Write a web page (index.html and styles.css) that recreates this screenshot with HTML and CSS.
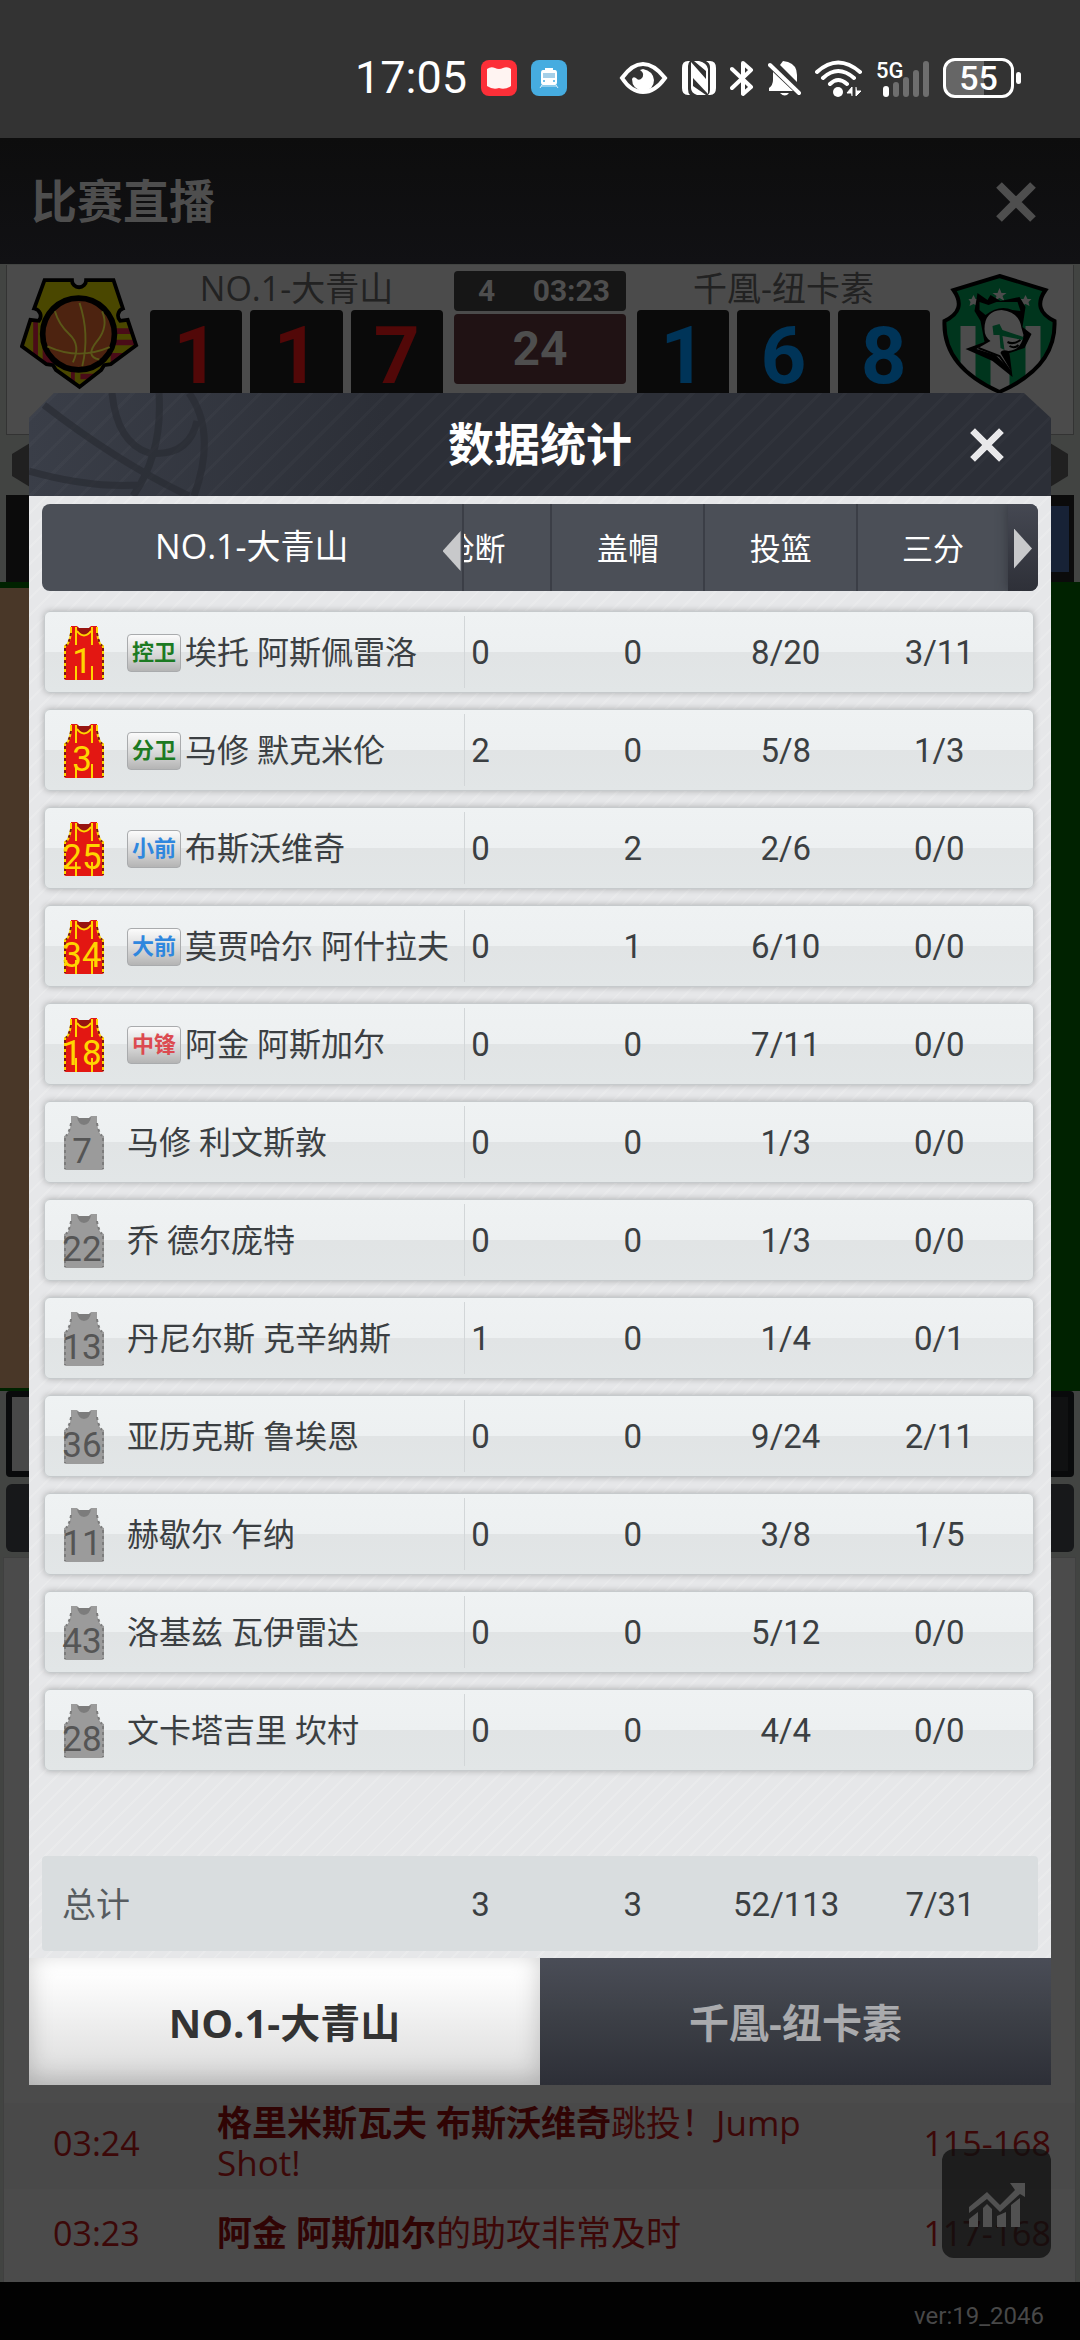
FILE: index.html
```html
<!DOCTYPE html>
<html lang="zh-CN">
<head>
<meta charset="UTF-8">
<meta name="viewport" content="width=device-width, initial-scale=1">
<title>比赛直播</title>
<link rel="stylesheet" href="styles.css">
</head>
<body>

	<!-- shared shapes -->
	<svg class="defs" aria-hidden="true">
		<symbol id="jersey" viewBox="0 0 42 54">
			<path class="j-body" d="M8 0H14L16 2H26L28 0H34V7Q35 15 38 19L41 20V52Q41 54 39 54H3Q1 54 1 52V20L4 19Q7 15 8 7Z"/>
			<path class="j-neck" d="M14 1L16 2H26L28 1Q27 8 21 9Q15 8 14 1Z"/>
			<path class="j-line" d="M13 1V19M29 1V19M14 5Q21 14 28 5M13 40V54M29 40V54M8 1V7Q7 15 4 19L2 20V53M34 1V7Q35 15 38 19L40 20V53"/>
			<path class="j-side" d="M2 22V53M40 22V53M8 7Q7 15 3 20M34 7Q35 15 39 20"/>
		</symbol>
		<symbol id="cross" viewBox="0 0 40 40">
			<path d="M3 3L37 37M37 3L3 37" fill="none" stroke="currentColor" stroke-width="8"/>
		</symbol>
	</svg>

	<div class="statusbar">
		<div class="status-group">
			<span class="clock">17:05</span>
			<svg width="36" height="36" viewBox="0 0 36 36"><rect width="36" height="36" rx="8" fill="#fc2f38"/><path d="M6 9Q10 6 14 8Q18 10 22 8Q26 6 30 9V26Q24 30 18 28Q12 30 6 26Z" fill="#fff4f2"/></svg>
			<svg width="36" height="36" viewBox="0 0 36 36"><rect width="36" height="36" rx="8" fill="#46ace0"/><path d="M14 8H22V10H24Q26 10 26 13V22Q26 25 24 25H12Q10 25 10 22V13Q10 10 12 10H14Z" fill="#fff"/><path d="M12 13H24V18H12Z" fill="#a5cfe8"/><circle cx="13" cy="21" r="1" fill="#46ace0"/><circle cx="23" cy="21" r="1" fill="#46ace0"/><path d="M11 25L9 28M25 25L27 28M10 26H26" stroke="#d6ecf8" stroke-width="1"/></svg>
		</div>
		<div class="status-group">
			<svg width="49" height="34" viewBox="0 0 49 34"><path d="M3 17Q13 3 24 3T46 17Q36 31 24 31T3 17Z" fill="none" stroke="#fff" stroke-width="4"/><path d="M24 8Q34 10 35 19Q35 29 24 30Q13 28 13 18Q14 15 17 17Q19 20 22 18Q27 13 21 9Z" fill="#fff"/></svg>
			<svg width="34" height="34" viewBox="0 0 34 34"><path d="M8 0H6Q0 0 0 7V27Q0 34 6 34H8Q6 32 6 28V5Q6 2 8 0ZM26 34H28Q34 34 34 27V7Q34 0 28 0H24Q28 2 28 6V29Q28 32 26 34Z" fill="#fff"/><path d="M9 1L24 18V10L12 0H17Q25 2 26 8V33L11 17V25L24 34H15Q9 32 9 27Z" fill="#fff"/></svg>
			<svg width="24" height="37" viewBox="0 0 24 37"><path d="M2 9L21 27L13 34V3L21 10L2 28" fill="none" stroke="#fff" stroke-width="4" stroke-linejoin="round" stroke-linecap="round"/></svg>
			<svg width="33" height="37" viewBox="0 0 33 37"><path d="M5 12L25 31H1V28Q5 25 5 20ZM12 5L15 1L20 2Q29 5 29 15V22Z" fill="#fff"/><path d="M2 5L31 33" stroke="#fff" stroke-width="4" stroke-linecap="round"/><path d="M12 33H21Q17 38 12 33Z" fill="#fff"/></svg>
			<svg width="47" height="37" viewBox="0 0 47 37"><path d="M2 12Q23 -7 45 12M8 18Q23 4 39 18M15 24Q23 16 32 24" fill="none" stroke="#fff" stroke-width="4" stroke-linecap="round"/><circle cx="23" cy="32" r="5" fill="#fff"/><path d="M37 36V27L32 33H36M41 27V36L46 31H42" fill="#fff" stroke="#fff"/></svg>
			<svg class="signal" width="53" height="37" viewBox="0 0 53 37"><text x="0" y="18" font-size="22" font-weight="500" fill="#fff">5G</text><g stroke-width="6" stroke-linecap="round"><path d="M10 29V34" stroke="#fff"/><path d="M20 25V34M30 20V34M40 13V34M50 4V34" stroke="#6e6e6e"/></g></svg>
			<div class="battery"><span>55</span></div>
		</div>
	</div>

	<header class="topbar">
		<h1>比赛直播</h1>
		<button type="button" aria-label="关闭直播"><svg width="40" height="40"><use href="#cross"/></svg></button>
	</header>

	<section class="scoreboard">
		<svg class="logo" viewBox="0 0 126 120">
			<clipPath id="cut"><path d="M26 3H55A7 7 0 0 0 70 3H99L109 33A8 8 0 0 0 106 46L114 45L123 72L96 92L89 93L86 98L63 116L38 98L35 93L28 92L2 73L11 45L20 46A8 8 0 0 0 15 33Z"/></clipPath>
			<g clip-path="url(#cut)"><path d="M0 0H126V120H0Z" fill="#4a4700"/><path d="M14 40H19V92H14ZM24 70H36V100H24ZM98 54H126V60H98ZM98 66H126V72H98ZM96 80H126V96H96ZM54 96H58V120H54ZM64 102H90V108H64Z" fill="#4a0c18"/></g>
			<path d="M26 3H55A7 7 0 0 0 70 3H99L109 33A8 8 0 0 0 106 46L114 45L123 72L96 92L89 93L86 98L63 116L38 98L35 93L28 92L2 73L11 45L20 46A8 8 0 0 0 15 33Z" fill="none" stroke="#000" stroke-width="4"/>
			<circle cx="62" cy="60" r="38" fill="#4d2310" stroke="#000" stroke-width="6"/>
			<path d="M37 36Q41 50 52 60Q65 72 56 90M63 27Q74 60 66 94M87 36Q94 52 82 67Q68 84 84 87M29 73Q62 88 95 74" fill="none" stroke="#5a5718" stroke-width="2"/>
		</svg>
		<div class="team home">
			<p>NO.1-大青山</p>
			<div class="digits"><b>1</b><b>1</b><b>7</b></div>
		</div>
		<div class="timer">
			<div class="quarter"><span>4</span><span>03:23</span></div>
			<div class="shot">24</div>
		</div>
		<div class="team away">
			<p>千凰-纽卡素</p>
			<div class="digits"><b>1</b><b>6</b><b>8</b></div>
		</div>
		<svg class="logo" viewBox="0 0 116 122">
			<clipPath id="shield"><path d="M57 3L103 17Q89 37 112 48Q114 94 57 119Q0 94 2 48Q25 37 11 17Z"/></clipPath>
			<g clip-path="url(#shield)"><path d="M0 0H116V122H0Z" fill="#00351d"/><path d="M18 53H33V122H18ZM48 53H67V122H48ZM83 53H98V122H83Z" fill="#4c4c4c"/></g>
			<path d="M57 3L103 17Q89 37 112 48Q114 94 57 119Q0 94 2 48Q25 37 11 17Z" fill="none" stroke="#000" stroke-width="4"/>
			<path d="M57 15L59 20H64L60 23L62 28L57 25L52 28L54 23L50 20H55ZM31 22L33 26H37L34 29L35 33L31 31L27 33L28 29L26 26H29ZM83 22L85 26H89L86 29L87 33L83 31L79 33L80 29L78 26H81Z" fill="#4c4c4c"/>
			<path d="M35 20L45 27L48 22L58 28L77 24L83 34L80 54L89 61L82 75L67 80L70 104L50 88L23 76L42 69L38 48L32 38Z" fill="#000"/>
			<path d="M37 29L46 32L54 29L75 29L78 38L70 37Q57 31 43 42L37 37Z" fill="#00351d"/>
			<path d="M42 56Q42 38 59 37Q77 39 79 55L81 62Q79 77 66 78Q59 76 58 80L68 97L53 82L34 76L48 68Q42 64 42 56Z" fill="#4c4c4c"/>
			<path d="M50 53L57 51L60 57L81 64L80 67L60 63L62 77L58 75L57 62L51 62Z" fill="#00351d"/>
			<path d="M65 69Q71 72 78 67M67 73Q72 76 76 72M36 75L57 83L67 97" fill="none" stroke="#000" stroke-width="2"/>
		</svg>
	</section>
	<div class="ribbon"><i></i><i></i></div>
	<div class="controls"></div>
	<div class="court"></div>
	<div class="panel"></div>
	<div class="panel-bar"></div>

	<section class="feed">
		<div class="play shade">
			<time>03:24</time>
			<p><b>格里米斯瓦夫 布斯沃维奇</b>跳投！Jump Shot!</p>
			<span>115-168</span>
		</div>
		<div class="play">
			<time>03:23</time>
			<p><b>阿金 阿斯加尔</b>的助攻非常及时</p>
			<span>117-168</span>
		</div>
		<button type="button" class="chart" aria-label="数据">
			<svg width="56" height="46" viewBox="0 0 56 46"><path d="M0 26L18 11L31 24L46 9L41 2H56V16L51 13L31 31L18 18L0 32Z"/><path d="M0 38L9 31V46H0ZM14 27L18 23L23 28V46H14ZM28 35L37 31V46H28ZM42 24L51 17V46H42Z"/></svg>
		</button>
	</section>
	<footer>ver:19_2046</footer>

	<!-- stats popup -->
	<div class="dialog" role="dialog" aria-labelledby="stats-title">
		<div class="dialog-head">
			<svg class="ball" viewBox="0 0 190 103"><path d="M15 12Q90 70 160 103M0 78Q60 95 110 92M83 0Q88 50 120 60Q160 64 168 28M130 0Q134 60 104 103M160 0Q188 40 165 103"/></svg>
			<h2 id="stats-title">数据统计</h2>
			<button type="button" aria-label="关闭"><svg width="34" height="34"><use href="#cross"/></svg></button>
		</div>

		<div class="dialog-body">
			<table>
				<thead>
					<tr>
						<th class="team-name">NO.1-大青山<i class="prev"></i></th>
						<th class="cut"><span>抢断</span></th>
						<th>盖帽</th>
						<th>投篮</th>
						<th>三分</th>
						<td class="next"><i></i></td>
					</tr>
				</thead>
				<tbody>
					<tr>
						<td class="name"><svg class="jersey on"><use href="#jersey"/><text x="19" y="47">1</text></svg><em class="guard">控卫</em>埃托 阿斯佩雷洛</td>
						<td class="cut"><span>0</span></td><td>0</td><td>8/20</td><td>3/11</td>
					</tr>
					<tr>
						<td class="name"><svg class="jersey on"><use href="#jersey"/><text x="19" y="47">3</text></svg><em class="guard">分卫</em>马修 默克米伦</td>
						<td class="cut"><span>2</span></td><td>0</td><td>5/8</td><td>1/3</td>
					</tr>
					<tr>
						<td class="name"><svg class="jersey on"><use href="#jersey"/><text x="19" y="47">25</text></svg><em class="forward">小前</em>布斯沃维奇</td>
						<td class="cut"><span>0</span></td><td>2</td><td>2/6</td><td>0/0</td>
					</tr>
					<tr>
						<td class="name"><svg class="jersey on"><use href="#jersey"/><text x="19" y="47">34</text></svg><em class="forward">大前</em>莫贾哈尔 阿什拉夫</td>
						<td class="cut"><span>0</span></td><td>1</td><td>6/10</td><td>0/0</td>
					</tr>
					<tr>
						<td class="name"><svg class="jersey on"><use href="#jersey"/><text x="19" y="47">18</text></svg><em class="center">中锋</em>阿金 阿斯加尔</td>
						<td class="cut"><span>0</span></td><td>0</td><td>7/11</td><td>0/0</td>
					</tr>
					<tr>
						<td class="name"><svg class="jersey"><use href="#jersey"/><text x="19" y="47">7</text></svg>马修 利文斯敦</td>
						<td class="cut"><span>0</span></td><td>0</td><td>1/3</td><td>0/0</td>
					</tr>
					<tr>
						<td class="name"><svg class="jersey"><use href="#jersey"/><text x="19" y="47">22</text></svg>乔 德尔庞特</td>
						<td class="cut"><span>0</span></td><td>0</td><td>1/3</td><td>0/0</td>
					</tr>
					<tr>
						<td class="name"><svg class="jersey"><use href="#jersey"/><text x="19" y="47">13</text></svg>丹尼尔斯 克辛纳斯</td>
						<td class="cut"><span>1</span></td><td>0</td><td>1/4</td><td>0/1</td>
					</tr>
					<tr>
						<td class="name"><svg class="jersey"><use href="#jersey"/><text x="19" y="47">36</text></svg>亚历克斯 鲁埃恩</td>
						<td class="cut"><span>0</span></td><td>0</td><td>9/24</td><td>2/11</td>
					</tr>
					<tr>
						<td class="name"><svg class="jersey"><use href="#jersey"/><text x="19" y="47">11</text></svg>赫歇尔 乍纳</td>
						<td class="cut"><span>0</span></td><td>0</td><td>3/8</td><td>1/5</td>
					</tr>
					<tr>
						<td class="name"><svg class="jersey"><use href="#jersey"/><text x="19" y="47">43</text></svg>洛基兹 瓦伊雷达</td>
						<td class="cut"><span>0</span></td><td>0</td><td>5/12</td><td>0/0</td>
					</tr>
					<tr>
						<td class="name"><svg class="jersey"><use href="#jersey"/><text x="19" y="47">28</text></svg>文卡塔吉里 坎村</td>
						<td class="cut"><span>0</span></td><td>0</td><td>4/4</td><td>0/0</td>
					</tr>
				</tbody>
				<tfoot>
					<tr>
						<th>总计</th>
						<td class="cut"><span>3</span></td><td>3</td><td>52/113</td><td>7/31</td>
					</tr>
				</tfoot>
			</table>
		</div>

		<div class="tabs">
			<button type="button" class="active">NO.1-大青山</button>
			<button type="button">千凰-纽卡素</button>
		</div>
	</div>

</body>
</html>
```
FILE: styles.css
```css
* {
	box-sizing: border-box;
}

body {
	position: relative;
	display: flex;
	flex-direction: column;
	min-height: 100vh;
	margin: 0;
	background: #424442;
	font-family: Roboto, "Noto Sans CJK SC", sans-serif;
	font-size: 34px;
	line-height: 40px;
}

h1, h2, p {
	margin: 0;
}

button {
	padding: 0;
	border: 0;
	background: none;
	font-family: inherit;
	line-height: inherit;
	cursor: pointer;
}

svg {
	display: block;
	flex-shrink: 0;
}

.defs {
	position: absolute;
	width: 0;
	height: 0;
}

/* 状态栏 */
.statusbar {
	display: flex;
	justify-content: flex-end;
	gap: 52px;
	padding: 58px 60px 40px;
	background: #333333;
	color: #ffffff;
}

.status-group {
	display: flex;
	align-items: center;
	gap: 14px;
	height: 40px;
}

.clock {
	font-size: 45px;
}

.signal {
	overflow: visible;
}

.battery {
	position: relative;
	width: 71px;
	height: 40px;
	margin-right: 6px;
	border: 3px solid #ffffff;
	border-radius: 12px;
	background: linear-gradient(90deg, #666666 58%, #333333 58%);
	text-align: center;
	font-size: 34px;
	font-weight: 500;
	line-height: 34px;
}

.battery::after {
	content: "";
	position: absolute;
	top: 11px;
	right: -10px;
	width: 5px;
	height: 12px;
	border-radius: 3px;
	background: #ffffff;
}

/* 标题栏 */
.topbar {
	display: flex;
	align-items: center;
	justify-content: space-between;
	height: 126px;
	padding: 2px 44px 0 31px;
	background: linear-gradient(#0d0d0d, #111114);
	color: #4e4e4e;
}

.topbar h1 {
	font-size: 46px;
	line-height: 60px;
}

.topbar button {
	color: #4e4e4e;
}

/* 比分牌 */
.scoreboard {
	display: flex;
	gap: 11px;
	height: 170px;
	margin: 1px 6px 0;
	padding: 6px 13px 0;
	border: solid #333333;
	border-width: 0 1px 1px;
	background: #4b4b4b;
	overflow: hidden;
}

.logo {
	width: 119px;
	height: 122px;
	margin-top: 2px;
}

.team {
	flex: 1;
	color: #222222;
	text-align: center;
}

.team p {
	margin-bottom: 5px;
	font-family: "Open Sans", "Noto Sans CJK SC", sans-serif;
	line-height: 34px;
}

.digits {
	display: flex;
	gap: 8px;
}

.digits b {
	flex: 1;
	height: 110px;
	border-radius: 4px;
	background: #0a0a0a;
	font-size: 80px;
	line-height: 92px;
}

.home b {
	color: #520808;
}

.away b {
	color: #003458;
}

.timer {
	width: 172px;
	color: #4e4e4e;
	font-weight: bold;
}

.quarter {
	display: flex;
	justify-content: space-between;
	margin-bottom: 3px;
	padding: 0 16px 0 24px;
	border-radius: 4px;
	background: #161616;
	font-size: 30px;
}

.shot {
	border-radius: 4px;
	background: #201214;
	font-size: 48px;
	line-height: 70px;
	text-align: center;
}

.ribbon {
	display: flex;
	align-items: center;
	justify-content: space-between;
	height: 60px;
	padding: 0 12px;
}

.ribbon i {
	width: 36px;
	height: 44px;
	background: #202020;
	clip-path: polygon(0 25%, 50% 0, 100% 25%, 100% 75%, 50% 100%, 0 75%);
}

.controls {
	height: 87px;
	margin: 0 6px;
	border: solid #0b0b0b;
	border-width: 11px 5px 10px;
	background: linear-gradient(90deg, #0b0b0b 50%, #172236 50%);
}

.court {
	height: 809px;
	border-top: 6px solid #002200;
	border-bottom: 3px solid #002200;
	background: linear-gradient(90deg, #493728 50%, #002200 50%);
}

.panel {
	height: 86px;
	margin: 0 6px;
	border: 6px solid #090a0b;
	border-radius: 4px;
	background: linear-gradient(90deg, #484848 50%, #101112 50%);
}

.panel-bar {
	height: 68px;
	margin: 7px 6px 5px;
	border-radius: 6px;
	background: #17181a;
}

/* 文字直播 */
.feed {
	position: relative;
	display: flex;
	flex: 1;
	flex-direction: column;
	justify-content: flex-end;
	margin: 0 4px 0 3px;
	border: solid #404040;
	border-width: 1px 1px 0;
	background: #4b4b4b;
	color: #3c0808;
	font-family: "Open Sans", "Noto Sans CJK SC", sans-serif;
}

.play {
	display: flex;
	align-items: center;
	min-height: 93px;
	padding: 0 24px 6px 49px;
}

.play.shade {
	min-height: 85px;
	background: #494949;
}

.play time {
	width: 164px;
}

.play p {
	flex: 1;
	padding-right: 110px;
	font-size: 35px;
}

.play b {
	color: #300404;
}

.chart {
	position: absolute;
	right: 24px;
	bottom: 24px;
	display: flex;
	align-items: center;
	justify-content: center;
	width: 109px;
	height: 109px;
	border-radius: 12px;
	background: rgba(15, 15, 15, 0.75);
}

.chart path {
	fill: #515151;
}

footer {
	padding: 18px 36px 8px 0;
	background: #020202;
	color: #484848;
	font-size: 24px;
	line-height: 32px;
	text-align: right;
}

/* 数据统计弹窗 */
.dialog {
	position: absolute;
	top: 393px;
	right: 29px;
	left: 29px;
}

.dialog-head {
	position: relative;
	display: flex;
	align-items: center;
	justify-content: center;
	height: 103px;
	background:
		repeating-linear-gradient(135deg, rgba(255, 255, 255, 0.02) 0 3px, transparent 3px 18px),
		linear-gradient(90deg, #3a3e48, #2c2f37 35%);
	clip-path: polygon(25px 0, calc(100% - 27px) 0, 100% 25px, 100% 100%, 0 100%, 0 25px);
	color: #ffffff;
}

.dialog-head h2 {
	font-size: 46px;
	line-height: 60px;
}

.dialog-head button {
	position: absolute;
	right: 47px;
	color: #e8e8ea;
}

.ball {
	position: absolute;
	top: 0;
	left: 0;
	width: 190px;
	height: 103px;
}

.ball path {
	fill: none;
	stroke: #292c33;
	stroke-width: 7;
	opacity: 0.7;
}

.dialog-body {
	padding: 8px 13px 7px;
	background:
		repeating-linear-gradient(135deg, rgba(255, 255, 255, 0.15) 0 2px, transparent 2px 12px),
		#e6e7e9;
}

table {
	display: block;
	color: #3b3f42;
	font-size: 33px;
}

thead, tfoot {
	display: block;
}

tr {
	display: grid;
	grid-template-columns: 421fr 92fr 153fr 154fr 154fr 17fr;
}

th, td {
	display: flex;
	align-items: center;
	justify-content: center;
	min-width: 0;
	padding: 2px 0 0;
	font-weight: normal;
}

/* 横向滚动后只露出一部分的列 */
.cut {
	justify-content: flex-end;
	overflow: hidden;
}

.cut span {
	flex-shrink: 0;
	width: 152px;
	text-align: center;
}

thead tr {
	grid-template-columns: 422fr 89fr 153fr 153fr 150fr 30fr;
	height: 87px;
	border-radius: 8px;
	background: #4b4f57;
	color: #ffffff;
	font-size: 31px;
	overflow: hidden;
}

thead th {
	padding-top: 4px;
	border-right: 2px solid #3b3e46;
}

thead th:nth-child(5) {
	border-right: 0;
}

thead .team-name {
	position: relative;
	padding: 0 0 4px;
	font-family: "Open Sans", "Noto Sans CJK SC", sans-serif;
	font-size: 34px;
}

.prev {
	position: absolute;
	top: 27px;
	right: 1px;
	width: 18px;
	height: 40px;
	background: #c8c9cb;
	clip-path: polygon(100% 0, 100% 100%, 0 50%);
}

.next {
	background: linear-gradient(#454852, #2e3038);
	box-shadow: 0 0 12px #33363e;
}

.next i {
	width: 18px;
	height: 40px;
	background: #c8c9cb;
	clip-path: polygon(0 0, 100% 50%, 0 100%);
}

tbody {
	display: flex;
	flex-direction: column;
	gap: 16px;
	padding: 20px 4px 85px 2px;
}

tbody tr {
	height: 82px;
	border: 1px solid #c6cacc;
	border-radius: 6px;
	background: linear-gradient(#eff2f3, #edf0f1 50%, #e1e4e5 50%, #e2e6e7);
	box-shadow: 0 0 6px rgba(0, 0, 0, 0.25);
}

.name {
	justify-content: flex-start;
	margin: 4px 0;
	padding-left: 18px;
	border-right: 1px solid #d2d6d8;
	font-size: 32px;
	white-space: nowrap;
}

.jersey {
	--body: #9b9b9b;
	--neck: #7c7c7c;
	--line: transparent;
	--side: #7c7c7c;
	--number: #555555;
	width: 42px;
	height: 54px;
	margin-right: 22px;
	overflow: visible;
}

.jersey.on {
	--body: #e31712;
	--neck: #971410;
	--line: #ffd500;
	--side: #7d1a10;
	--number: #ffd500;
}

.jersey text {
	fill: var(--number);
	font-size: 35px;
	text-anchor: middle;
}

.j-body {
	fill: var(--body);
}

.j-neck {
	fill: var(--neck);
}

.j-line {
	fill: none;
	stroke: var(--line);
	stroke-width: 2;
}

.j-side {
	fill: none;
	stroke: var(--side);
	stroke-dasharray: 3 3;
	stroke-width: 2;
}

.name em {
	width: 54px;
	height: 38px;
	margin-right: 4px;
	border: 1px solid #a9abad;
	border-radius: 4px;
	background: linear-gradient(#fbfbfb, #d8d8d8 55%, #b4b4b4);
	font-size: 22px;
	font-style: normal;
	font-weight: bold;
	line-height: 36px;
	text-align: center;
}

.name .guard {
	color: #1c7a22;
}

.name .forward {
	color: #2f87de;
}

.name .center {
	color: #dc4a50;
}

tfoot tr {
	height: 95px;
	padding: 0 4px 0 2px;
	border-radius: 4px;
	background: #d9dddf;
}

tfoot th {
	justify-content: flex-start;
	padding-left: 18px;
	color: #575c60;
	font-size: 34px;
}

/* 底部切换 */
.tabs {
	display: flex;
}

.tabs button {
	flex: 1;
	height: 127px;
	padding-top: 2px;
	background: linear-gradient(#4a4d57, #3d4047 45%, #2d2f37);
	color: #a9aaad;
	font-family: "Open Sans", "Noto Sans CJK SC", sans-serif;
	font-size: 40px;
	font-weight: bold;
}

.tabs .active {
	background: linear-gradient(#ffffff 10%, #dadada);
	box-shadow: inset 0 -6px 24px rgba(0, 0, 0, 0.2);
	color: #333333;
}
```
